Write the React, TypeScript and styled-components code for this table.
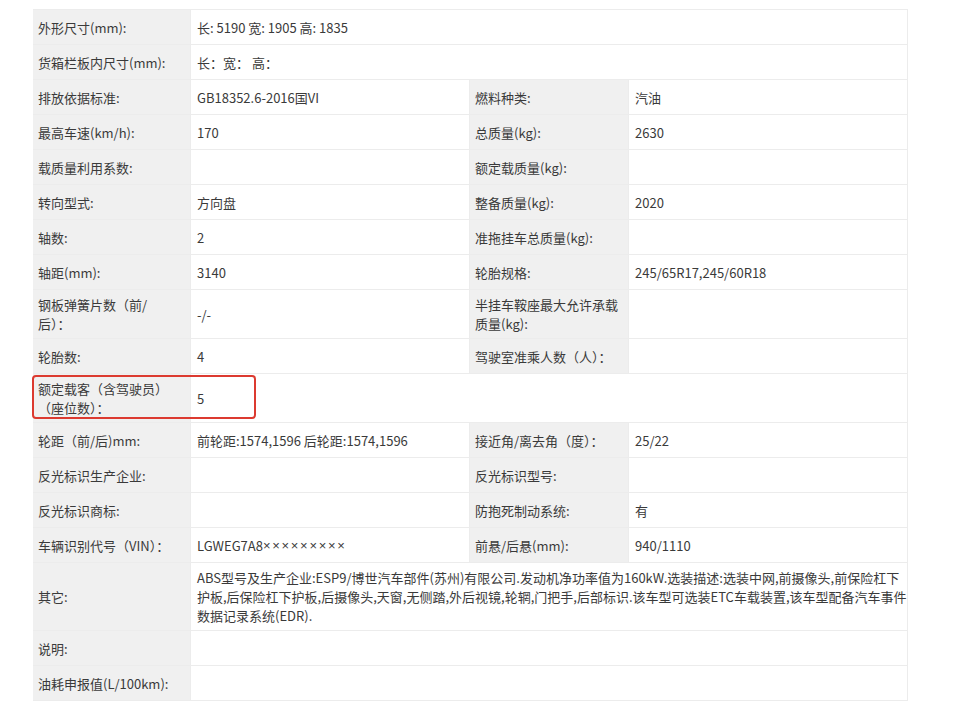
import React from "react";
import styled, { createGlobalStyle } from "styled-components";

const GlobalStyle = createGlobalStyle`
  html, body {
    margin: 0;
    padding: 0;
    background: #ffffff;
  }
  body {
    font-family: "Noto Sans CJK SC", "Noto Sans", "Liberation Sans", sans-serif;
    color: #333333;
  }
`;

const Page = styled.div`
  padding: 9px 0 19px 33px;
`;

const Sheet = styled.div`
  position: relative;
  display: grid;
  grid-template-columns: 158px 279px 159px 279px;
  width: 875px;
  border-top: 1px solid #ececec;
  font-size: 13px;
  line-height: 19px;
`;

const Cell = styled.div<{ $label?: boolean; $span?: number }>`
  position: relative;
  box-sizing: border-box;
  min-height: 35px;
  display: flex;
  align-items: center;
  padding: 5px 6px;
  border-bottom: 1px solid #ececec;
  border-right: 1px solid #ececec;
  background: ${(p) => (p.$label ? "#f0f0f0" : "#ffffff")};
  color: #3a3a3a;
  grid-column: ${(p) => (p.$span ? `span ${p.$span}` : "auto")};
  padding-left: ${(p) => (p.$label ? "5px" : "6px")};
`;

const Highlight = styled.div`
  position: absolute;
  z-index: 2;
  left: -1px;
  top: 1px;
  width: 224px;
  height: 44px;
  box-sizing: border-box;
  border: 2px solid #dc3a30;
  border-radius: 4px;
  pointer-events: none;
`;

const Cross = styled.span`
  font-family: "Liberation Sans", sans-serif;
  letter-spacing: 1.7px;
`;

const Nowrap = styled.span`
  white-space: nowrap;
`;

type Row =
  | { kind: "pair"; l1: React.ReactNode; v1: React.ReactNode; l2: React.ReactNode; v2: React.ReactNode }
  | { kind: "wide"; l1: React.ReactNode; v1: React.ReactNode; mark?: boolean };

const rows: Row[] = [
  { kind: "wide", l1: "外形尺寸(mm):", v1: "长: 5190 宽: 1905 高: 1835" },
  { kind: "wide", l1: "货箱栏板内尺寸(mm):", v1: "长：宽： 高：" },
  { kind: "pair", l1: "排放依据标准:", v1: "GB18352.6-2016国VI", l2: "燃料种类:", v2: "汽油" },
  { kind: "pair", l1: "最高车速(km/h):", v1: "170", l2: "总质量(kg):", v2: "2630" },
  { kind: "pair", l1: "载质量利用系数:", v1: "", l2: "额定载质量(kg):", v2: "" },
  { kind: "pair", l1: "转向型式:", v1: "方向盘", l2: "整备质量(kg):", v2: "2020" },
  { kind: "pair", l1: "轴数:", v1: "2", l2: "准拖挂车总质量(kg):", v2: "" },
  { kind: "pair", l1: "轴距(mm):", v1: "3140", l2: "轮胎规格:", v2: "245/65R17,245/60R18" },
  {
    kind: "pair",
    l1: (
      <>
        钢板弹簧片数（前/
        <br />
        后）：
      </>
    ),
    v1: "-/-",
    l2: (
      <>
        半挂车鞍座最大允许承载
        <br />
        质量(kg):
      </>
    ),
    v2: "",
  },
  { kind: "pair", l1: "轮胎数:", v1: "4", l2: "驾驶室准乘人数（人）：", v2: "" },
  {
    kind: "wide",
    l1: (
      <>
        额定载客（含驾驶员）
        <br />
        （座位数）：
      </>
    ),
    v1: "5",
    mark: true,
  },
  {
    kind: "pair",
    l1: "轮距（前/后)mm:",
    v1: "前轮距:1574,1596 后轮距:1574,1596",
    l2: "接近角/离去角（度）：",
    v2: "25/22",
  },
  { kind: "pair", l1: "反光标识生产企业:", v1: "", l2: "反光标识型号:", v2: "" },
  { kind: "pair", l1: "反光标识商标:", v1: "", l2: "防抱死制动系统:", v2: "有" },
  {
    kind: "pair",
    l1: "车辆识别代号（VIN）：",
    v1: (
      <>
        LGWEG7A8<Cross>×××××××××</Cross>
      </>
    ),
    l2: "前悬/后悬(mm):",
    v2: "940/1110",
  },
  {
    kind: "wide",
    l1: "其它:",
    v1: (
      <>
        ABS型号及生产企业:ESP9/博世汽车部件(苏州)有限公司.发动机净功率值为160kW.选装描述:选装中网,前摄像头,前保险杠下
        <br />
        护板,后保险杠下护板,后摄像头,天窗,无侧踏,外后视镜,轮辋,门把手,后部标识.该车型可选装ETC车载装置,该车型配备汽车事件
        <br />
        数据记录系统(EDR).
      </>
    ),
  },
  { kind: "wide", l1: "说明:", v1: "" },
  { kind: "wide", l1: "油耗申报值(L/100km):", v1: "" },
];

export default function App() {
  return (
    <>
      <GlobalStyle />
      <Page>
        <Sheet>
          {rows.map((r, i) =>
            r.kind === "pair" ? (
              <React.Fragment key={i}>
                <Cell $label>{r.l1}</Cell>
                <Cell>{r.v1}</Cell>
                <Cell $label>{r.l2}</Cell>
                <Cell>{r.v2}</Cell>
              </React.Fragment>
            ) : (
              <React.Fragment key={i}>
                <Cell $label>
                  {r.l1}
                  {r.mark && <Highlight />}
                </Cell>
                <Cell $span={3}>
                  <Nowrap>{r.v1}</Nowrap>
                </Cell>
              </React.Fragment>
            )
          )}
        </Sheet>
      </Page>
    </>
  );
}
